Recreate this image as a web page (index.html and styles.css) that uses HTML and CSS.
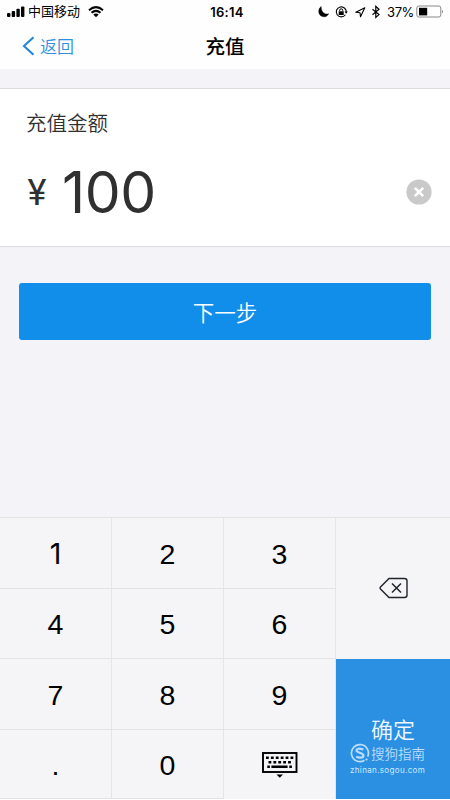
FILE: index.html
```html
<!DOCTYPE html>
<html lang="zh-CN">
<head>
<meta charset="utf-8">
<title>充值</title>
<link rel="stylesheet" href="styles.css">
</head>
<body>
<div class="screen">
  <header class="top">
    <div class="status">
      <div class="carrier">
        <svg width="18" height="12" viewBox="0 0 18 12"><rect x="0" y="7" width="3.4" height="4" rx="1"/><rect x="4.7" y="5" width="3.4" height="6" rx="1"/><rect x="9.4" y="2.8" width="3.4" height="8.2" rx="1"/><rect x="14" y="0.6" width="3.4" height="10.4" rx="1"/></svg>
        <span class="operator">中国移动</span>
        <svg width="16" height="12" viewBox="0 0 16 12"><path d="M1 4.2Q8-2 15 4.2M3.500 6.800Q8 3 12.500 6.800" fill="none" stroke="#000" stroke-width="2"/><path d="M5.300 8.500Q8 6.600 10.700 8.500L8 11.300Z"/></svg>
      </div>
      <span class="time">16:14</span>
      <div class="indicators">
        <svg width="126" height="14" viewBox="0 0 126 14">
          <path d="M3.200 1.500C-.8 4 0 11.800 6 11.800c2.200 0 3.700-1.100 4.700-3.100C6.500 10 3 6.500 3.200 1.500Z" stroke="#000" stroke-width=".4"/>
          <path d="M27.400 9.700a5 5 0 1 1 .8-2" fill="none" stroke="#000" stroke-width="1.100"/>
          <path d="M26.600 6.500h3.200l-1.600 2.200Z"/><rect x="20.700" y="6.300" width="5" height="3.700"/><path d="M21.700 6.300v-1a1.500 1.500 0 0 1 3 0v1" fill="none" stroke="#000"/>
          <path d="M37.800 7.300 46.800 2.800 42.500 11.800 42 7.700Z" fill="none" stroke="#000" stroke-width="1.100" stroke-linejoin="round"/>
          <path d="M54.500 4.200 61 9.600 57.800 12.500V1.400L61 4.300 54.500 9.700" fill="none" stroke="#000" stroke-width="1.200"/>
          <rect x="98.800" y="1" width="24" height="11" rx="2" fill="#fff" stroke="#888"/><rect x="101" y="2.800" width="8.200" height="7.600"/><path d="M124 4.700q2 1.800 0 3.600Z" fill="#888"/>
        </svg>
        <span class="percent">37%</span>
      </div>
    </div>
    <nav class="nav">
      <a class="back"><svg width="13" height="20" viewBox="0 0 13 20"><path d="M11.500 1.300 2 10l9.500 8.700" fill="none" stroke="#2186d8" stroke-width="2.100"/></svg><span>返回</span></a>
      <h1>充值</h1>
    </nav>
  </header>
  <section class="amount">
    <div class="label">充值金额</div>
    <div class="entry">
      <span class="yen">¥</span>
      <span class="value">100</span>
      <svg class="clear" width="26" height="26" viewBox="0 0 26 26"><circle cx="13" cy="13" r="12.600" fill="#c9c9c9"/><path d="m8.800 8.800 8.400 8.400m0-8.400-8.400 8.400" stroke="#fff" stroke-width="2.600"/></svg>
    </div>
  </section>
  <button class="next">下一步</button>
  <div class="keypad">
    <div class="key one">1</div><div class="key">2</div><div class="key">3</div>
    <div class="key delete"><svg width="30" height="22" viewBox="0 0 30 22"><path d="M10 1.500h15.500q2.500 0 2.500 2.500v14q0 2.500-2.500 2.500H10L1.500 12q-.8-1 0-2Z" fill="none" stroke="#20242a" stroke-width="1.400"/><path d="m13 6.500 9 9m0-9-9 9" stroke="#20242a" stroke-width="1.500"/></svg></div>
    <div class="key">4</div><div class="key">5</div><div class="key">6</div>
    <div class="key">7</div><div class="key">8</div><div class="key">9</div>
    <div class="confirm">
      <div class="confirm-text">确定</div>
      <div class="brand"><svg width="20" height="20" viewBox="0 0 20 20"><path d="M14.500 17.300a8.500 8.500 0 1 1 3.200-3.700" fill="none" stroke="#b9ddfa" stroke-width="1.700"/><path d="M13.500 6.500Q6.500 4.500 6.500 7.500c0 2.500 7 2 7 5 0 2.700-4.500 2.500-7.300 1.300" fill="none" stroke="#b9ddfa" stroke-width="2.200"/><circle cx="16.500" cy="16.500" r="1.100" fill="#b9ddfa"/></svg><span>搜狗指南</span></div>
      <div class="site">zhinan.sogou.com</div>
    </div>
    <div class="key">.</div><div class="key">0</div>
    <div class="key keyboard-key"><svg width="36" height="26" viewBox="0 0 36 26"><rect x="1" y="1" width="33.500" height="19" fill="none" stroke="#000" stroke-width="1.900"/><path d="M4 5.800h28" stroke="#000" stroke-width="2.500" stroke-dasharray="2.800 2.100"/><path d="M6.500 10.200h24" stroke="#000" stroke-width="2.500" stroke-dasharray="2.800 2.100"/><path d="M5.300 14.800h2.600m1.500 0h16.200m1.700 0h2.600" stroke="#000" stroke-width="2.500"/><path d="M14.500 22.500h6.500l-3.200 3.300Z"/></svg></div>
  </div>
</div>
</body>
</html>
```

FILE: styles.css
```css
* { box-sizing: border-box; }
body { margin: 0; font-family: Inter, "Noto Sans CJK SC", sans-serif; }
svg { display: block; flex: none; }
.screen { width: 450px; height: 800px; background: #f3f3f8; display: flex; flex-direction: column; overflow: hidden; }
.top { height: 69px; background: #fefefe; flex: none; }
.status { height: 23px; display: grid; grid-template-columns: 1fr 40px 1fr; align-items: center; }
.carrier { display: flex; align-items: center; padding-left: 7px; }
.operator { font: 13px/20px "Noto Sans CJK SC", sans-serif; margin: -2px 8px 0 3px; }
.time { font-size: 13px; font-weight: 600; letter-spacing: .3px; margin-left: 4px; text-align: center; white-space: nowrap; }
.indicators { position: relative; justify-self: end; margin-right: 6px; }
.percent { position: absolute; left: 69px; top: 0; font-size: 13px; line-height: 14px; letter-spacing: -.4px; }
.nav { height: 46px; display: grid; grid-template-columns: 1fr 60px 1fr; align-items: center; }
.back { display: flex; align-items: center; gap: 5px; padding-left: 22px; color: #3190dd; font: 350 17px/24px "Noto Sans CJK SC", sans-serif; }
h1 { margin: 0; text-align: center; font: 500 19.500px/28px "Noto Sans CJK SC", sans-serif; }
.amount { height: 159px; margin-top: 19px; padding: 18px 18px 0 26px; background: #fff; border-top: 1px solid #dcdce0; border-bottom: 1px solid #dcdce0; flex: none; color: #303030; }
.label { font: 350 20.500px/30px "Noto Sans CJK SC", sans-serif; color: #303030; }
.entry { display: flex; align-items: center; height: 70px; margin-top: 20px; }
.yen { width: 22px; font: 36px/70px Roboto, sans-serif; text-align: center; padding-top: 2px; }
.value { font: 57px/70px Inter, sans-serif; letter-spacing: -.5px; margin-left: 14px; padding-top: 2px; }
.clear { margin-left: auto; }
.next { width: 412px; height: 57px; margin: 36px 0 0 19px; padding: 0; border: 0; border-radius: 3px; background: #108ee9; color: #fff; font: 350 21.500px/57px "Noto Sans CJK SC", sans-serif; flex: none; }
.keypad { margin-top: auto; height: 283px; display: grid; grid-template-columns: 112px 112px 112px 114px; grid-template-rows: 71px 70px 71px 69px; border-top: 1px solid #e3e3e6; border-bottom: 1px solid #fff; background: #f5f5f8; }
.key { border-right: 1px solid #e6e6e9; border-bottom: 1px solid #e3e3e6; display: flex; align-items: center; justify-content: center; font: 28.500px/34px "Liberation Sans", sans-serif; color: #000; padding-top: 1px; }
.one { font-family: Inter, sans-serif; padding-top: 2px; }
.delete { grid-column: 4; grid-row: 1 / 3; border: 0; padding: 0 0 1px 1px; }
.confirm { grid-column: 4; grid-row: 3 / 5; background: #2b90e2; color: #b9ddfa; padding: 52px 0 0 14px; }
.confirm-text { color: #edf7ff; font: 350 22px/34px "Noto Sans CJK SC", sans-serif; padding-left: 21px; }
.brand { display: flex; align-items: center; height: 16px; gap: 1px; font: 350 13.500px/16px "Noto Sans CJK SC", sans-serif; white-space: nowrap; }
.site { font: 8px/12px Inter, sans-serif; letter-spacing: .35px; margin-top: 3px; color: #d0e9fc; }
.keyboard-key { padding: 0; border-bottom: 0; }
```
